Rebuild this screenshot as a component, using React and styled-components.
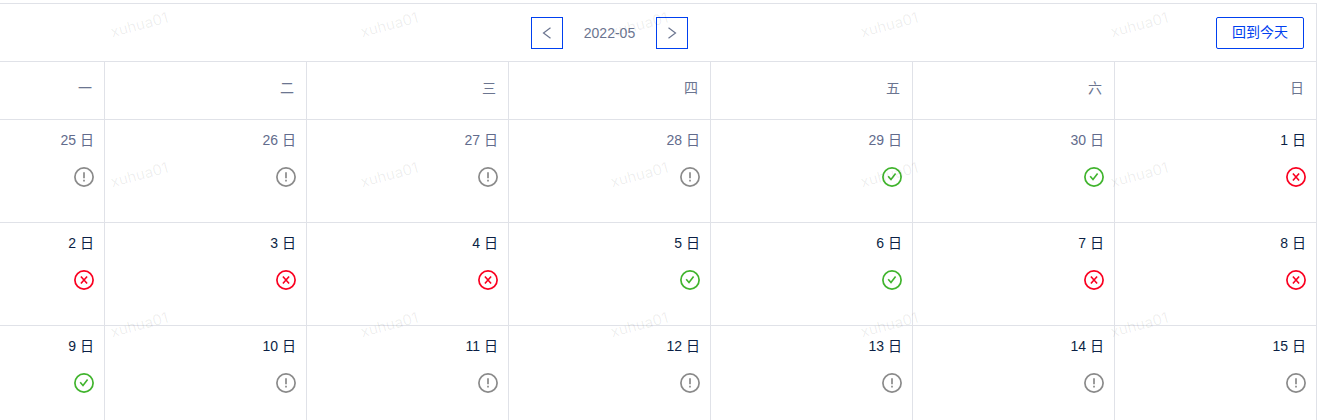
import React from 'react';
import styled, { createGlobalStyle } from 'styled-components';

const WEEKDAYS = ['一', '二', '三', '四', '五', '六', '日'];

const WEEKS = [
  [
    { day: 25, status: 'pending', outside: true },
    { day: 26, status: 'pending', outside: true },
    { day: 27, status: 'pending', outside: true },
    { day: 28, status: 'pending', outside: true },
    { day: 29, status: 'success', outside: true },
    { day: 30, status: 'success', outside: true },
    { day: 1, status: 'error' },
  ],
  [
    { day: 2, status: 'error' },
    { day: 3, status: 'error' },
    { day: 4, status: 'error' },
    { day: 5, status: 'success' },
    { day: 6, status: 'success' },
    { day: 7, status: 'error' },
    { day: 8, status: 'error' },
  ],
  [
    { day: 9, status: 'success' },
    { day: 10, status: 'pending' },
    { day: 11, status: 'pending' },
    { day: 12, status: 'pending' },
    { day: 13, status: 'pending' },
    { day: 14, status: 'pending' },
    { day: 15, status: 'pending' },
  ],
];

const STATUS = {
  pending: { color: '#8a8a8a', label: '待处理', width: 1.7, path: 'M10 5.2V11.2M10 12.8V14.6' },
  success: { color: '#40b42d', label: '成功', width: 1.6, path: 'M6.2 9.3L9 12.6L13.6 6.6' },
  error: { color: '#fa0020', label: '失败', width: 1.6, path: 'M6.9 6.5L13.1 13.5M13.1 6.5L6.9 13.5' },
};

const StatusIcon = ({ status }) => {
  const { color, label, width, path } = STATUS[status];

  return (
    <Icon viewBox="0 0 20 20" role="img" aria-label={label} stroke={color}>
      <circle cx="10" cy="10" r="9.1" strokeWidth="1.7" />
      <path d={path} strokeWidth={width} />
    </Icon>
  );
};

const App = () => {
  return (
    <Page>
      <GlobalStyle />
      <Calendar>
        <Toolbar>
          <MonthNav>
            <ArrowButton aria-label="上个月">
              <Arrow viewBox="0 0 12 12">
                <path d="M9.5 0.8L2.5 6L9.5 11.2" />
              </Arrow>
            </ArrowButton>
            <Month>2022-05</Month>
            <ArrowButton aria-label="下个月">
              <Arrow viewBox="0 0 12 12">
                <path d="M2.5 0.8L9.5 6L2.5 11.2" />
              </Arrow>
            </ArrowButton>
          </MonthNav>
          <TodayButton>回到今天</TodayButton>
        </Toolbar>

        <Table>
          <thead>
            <tr>
              {WEEKDAYS.map((name) => (
                <Weekday key={name} scope="col">{name}</Weekday>
              ))}
            </tr>
          </thead>
          <tbody>
            {WEEKS.map((week) => (
              <tr key={week[0].day}>
                {week.map(({ day, status, outside }) => (
                  <Day key={day} $outside={outside}>
                    <DayLabel>{day} 日</DayLabel>
                    <StatusIcon status={status} />
                  </Day>
                ))}
              </tr>
            ))}
          </tbody>
        </Table>
      </Calendar>

      <Watermark aria-hidden="true">
        {Array.from({ length: 15 }, (_, i) => (
          <Mark key={i}>xuhua01</Mark>
        ))}
      </Watermark>
    </Page>
  );
};

const GlobalStyle = createGlobalStyle`
  *, *::before, *::after {
    box-sizing: border-box;
  }

  html, body, #root {
    height: 100%;
  }

  body {
    margin: 0;
    background: white;
    color: #0b1f45;
    font-family: 'Liberation Sans', 'Noto Sans CJK SC', sans-serif;
    font-size: 14px;
    line-height: 20px;
  }

  button {
    font: inherit;
    cursor: pointer;
  }
`;

const Page = styled.main`
  position: relative;
  height: 100%;
  padding: 3px 15px 0 0;
  overflow: hidden;
`;

/* the first column starts outside the left edge of the view */
const Calendar = styled.section`
  margin-left: -98px;
  border: 1px solid #e0e2e8;
  border-width: 1px 0 0 1px;
`;

const Toolbar = styled.header`
  display: grid;
  grid-template-columns: 1fr auto 1fr;
  align-items: center;
  padding: 13px 12px 12px;
  border: 1px solid #e0e2e8;
  border-width: 0 1px 1px 0;
`;

const MonthNav = styled.div`
  grid-column: 2;
  display: flex;
  align-items: center;
  gap: 21px;
`;

const ArrowButton = styled.button`
  display: grid;
  place-items: center;
  width: 32px;
  height: 32px;
  padding: 0;
  border: 1px solid #0040f0;
  background: none;
`;

const Arrow = styled.svg`
  width: 12px;
  height: 12px;
  fill: none;
  stroke: #6b7590;
  stroke-width: 1.2;
`;

const Month = styled.span`
  color: #6b7590;
`;

const TodayButton = styled.button`
  justify-self: end;
  height: 32px;
  padding: 0 15px 2px;
  border: 1px solid #0040f0;
  border-radius: 2px;
  background: none;
  color: #0040f0;
`;

const Table = styled.table`
  width: 100%;
  table-layout: fixed;
  border-collapse: separate;
  border-spacing: 0;
`;

const Weekday = styled.th`
  padding: 16px 12px 21px;
  border: 1px solid #e0e2e8;
  border-width: 0 1px 1px 0;
  color: #6b7590;
  font-weight: 400;
  text-align: right;
`;

const Day = styled.td`
  padding: 10px 10px 35px;
  border: 1px solid #e0e2e8;
  border-width: 0 1px 1px 0;
  color: ${(p) => (p.$outside ? '#626b8c' : '#0b1f45')};
  text-align: right;
`;

const DayLabel = styled.div`
  margin-bottom: 17px;
`;

const Icon = styled.svg`
  display: block;
  width: 20px;
  height: 20px;
  margin-left: auto;
  fill: none;
`;

const Watermark = styled.div`
  position: absolute;
  inset: 0;
  display: grid;
  grid-template-columns: repeat(5, 250px);
  grid-auto-rows: 150px;
  padding-left: 110px;
  overflow: hidden;
  pointer-events: none;
`;

const Mark = styled.span`
  justify-self: start;
  align-self: start;
  margin-top: 15px;
  color: rgba(0, 0, 0, 0.07);
  font-family: Inter, sans-serif;
  font-size: 15px;
  font-weight: 400;
  transform: rotate(-15deg);
`;

export default App;
